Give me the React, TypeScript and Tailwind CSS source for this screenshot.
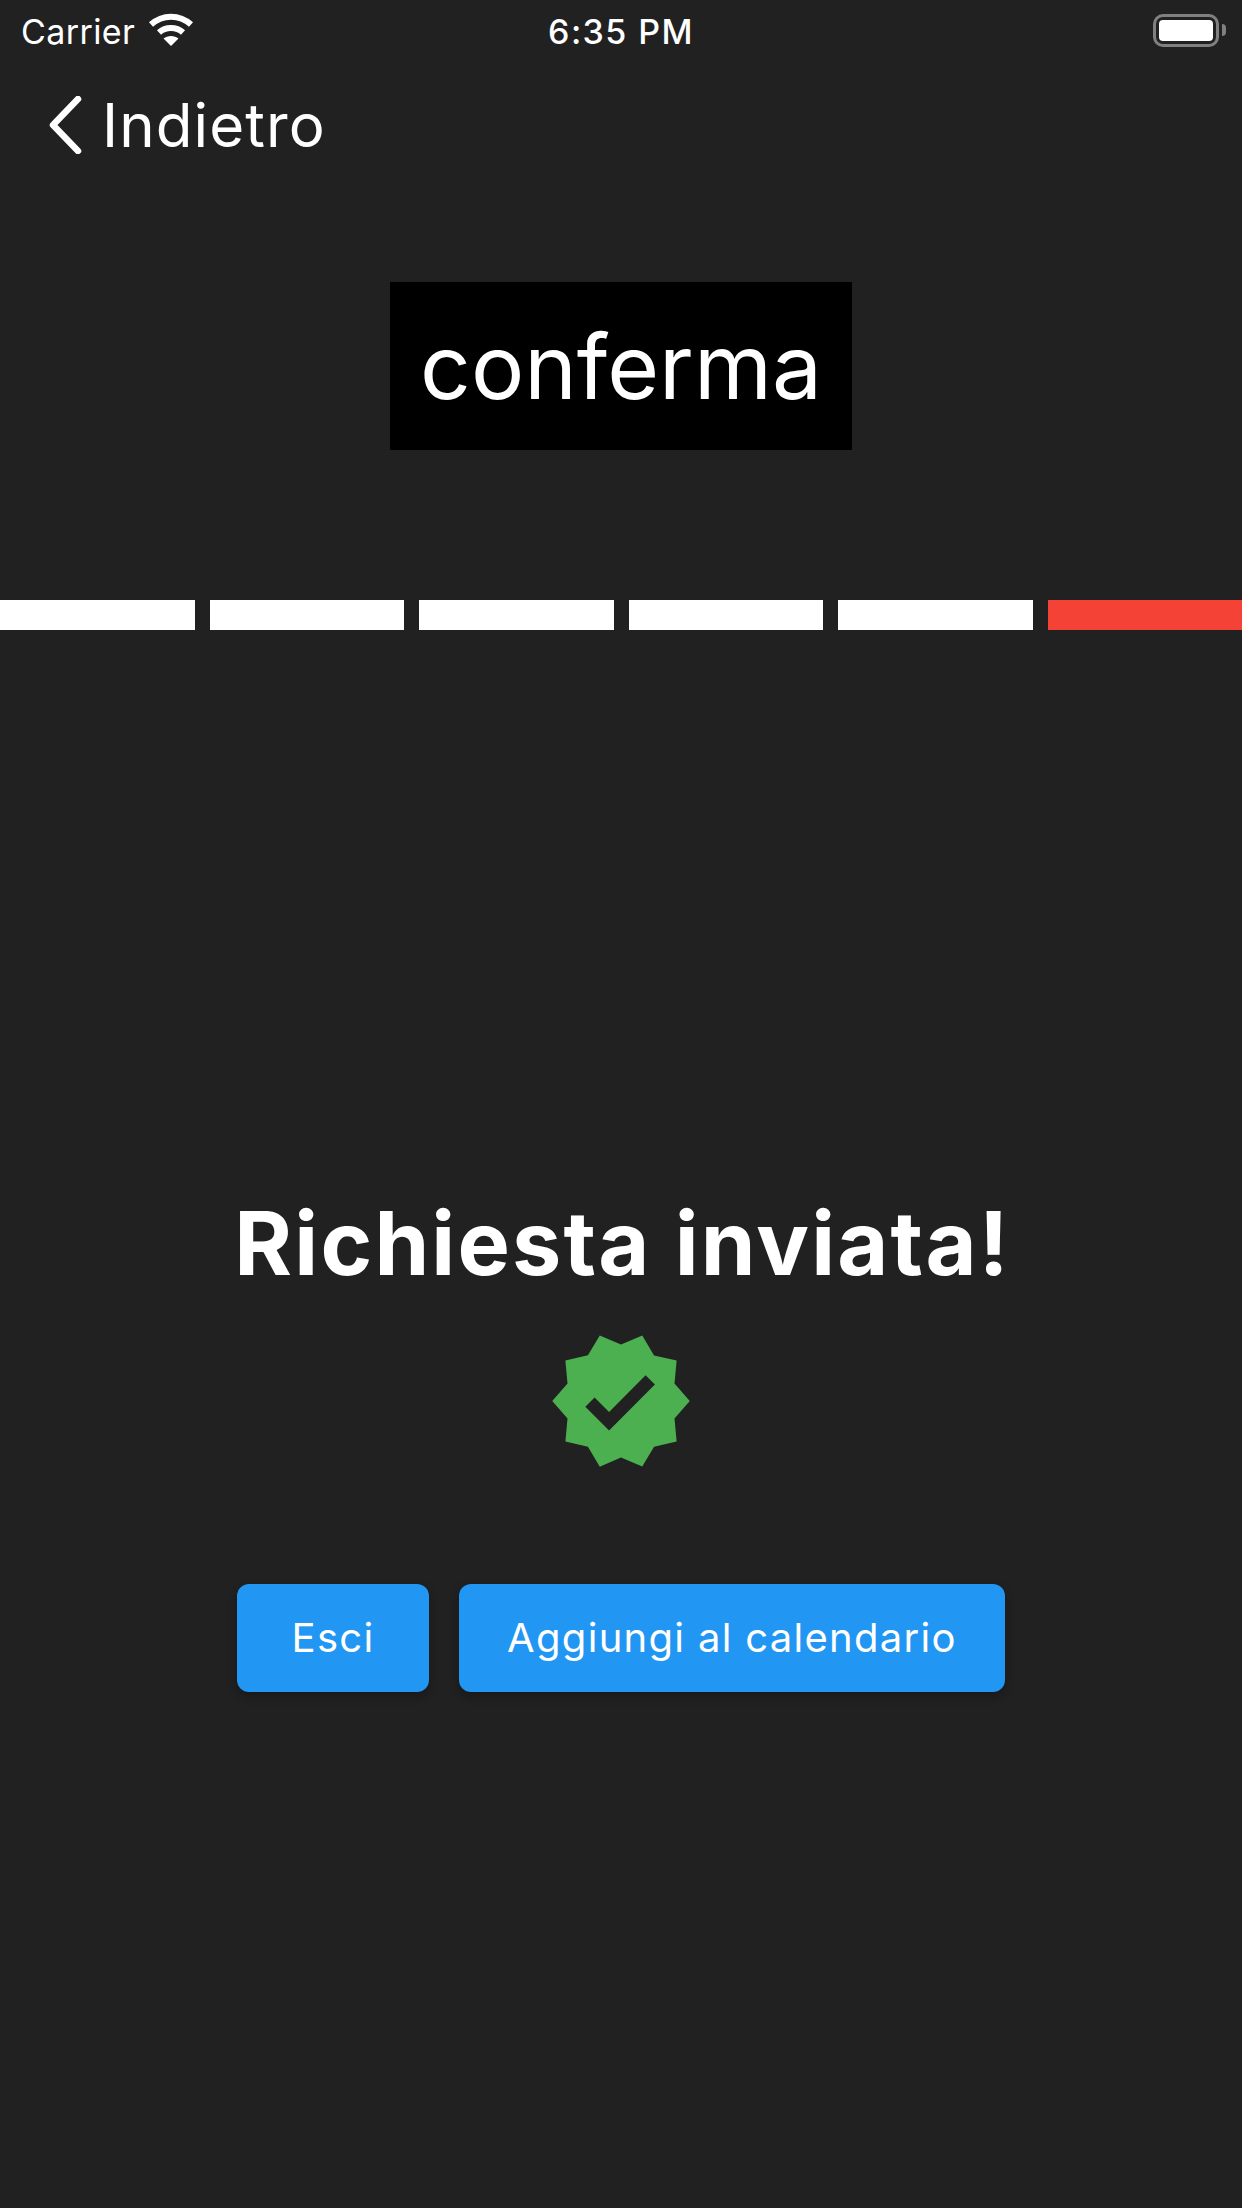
import React from "react";

const steps = [0, 1, 2, 3, 4, 5];

function WifiIcon() {
  return (
    <svg width="46" height="34" viewBox="0 0 46 34" fill="none">
      <path d="M3 11.5C14.5 1 31.5 1 43 11.5" stroke="#fff" strokeWidth="6" />
      <path d="M11 19.5C17.5 13.5 28.5 13.5 35 19.5" stroke="#fff" strokeWidth="6" />
      <path d="M23 33L15.5 25.5C19.5 22 26.5 22 30.5 25.5Z" fill="#fff" />
    </svg>
  );
}

function BatteryIcon() {
  return (
    <div className="flex items-center gap-[3px]">
      <div className="w-[66px] h-[33px] rounded-[10px] border-[3px] border-[#808080] p-[3px]">
        <div className="w-full h-full rounded-[4px] bg-white" />
      </div>
      <div className="w-[4px] h-[12px] rounded-r-full bg-[#808080]" />
    </div>
  );
}

function VerifiedIcon() {
  return (
    <svg width="150" height="150" viewBox="0 0 24 24" fill="#4caf50">
      <path d="M23 12l-2.44-2.79.34-3.69-3.61-.82-1.89-3.2L12 2.96 8.6 1.5 6.71 4.69 3.1 5.5l.34 3.7L1 12l2.44 2.79-.34 3.7 3.61.82L8.6 22.5l3.4-1.47 3.4 1.46 1.89-3.19 3.61-.82-.34-3.69L23 12zm-12.91 4.72l-3.8-3.81 1.48-1.48 2.32 2.33 5.85-5.87 1.48 1.48-7.33 7.35z" />
    </svg>
  );
}

export default function App() {
  return (
    <div className="w-[1242px] h-[2208px] bg-[#212121] text-white font-['Inter',sans-serif] flex flex-col overflow-hidden">
      <div className="grid grid-cols-3 items-center h-[60px] pl-[21px] pr-[16px]">
        <div className="flex items-center gap-[13px]">
          <span className="text-[34px] leading-none tracking-[0.4px] pt-[4px]">Carrier</span>
          <WifiIcon />
        </div>
        <span className="text-center text-[34px] leading-none font-medium tracking-[1.4px] pt-[4px] pr-[5px]">6:35 PM</span>
        <div className="flex justify-end">
          <BatteryIcon />
        </div>
      </div>

      <div className="flex items-center gap-[19px] h-[70px] mt-[30px] pl-[49px]">
        <svg width="34" height="58" viewBox="0 0 34 58" fill="none">
          <path d="M29 3L4 29L29 55" stroke="#fff" strokeWidth="6.5" strokeLinecap="round" strokeLinejoin="round" />
        </svg>
        <span className="text-[60px] leading-none tracking-[1.1px]">Indietro</span>
      </div>

      <div className="flex justify-center mt-[122px]">
        <div className="w-[462px] h-[168px] bg-black flex items-center justify-center">
          <span className="text-[89px] leading-none">conferma</span>
        </div>
      </div>

      <div className="flex gap-[15px] mt-[150px]">
        {steps.map((i) => (
          <div key={i} className={i === 5 ? "flex-1 h-[30px] bg-[#f44336]" : "flex-1 h-[30px] bg-white"} />
        ))}
      </div>

      <div className="flex flex-col items-center mt-[560px]">
        <h1 className="text-[88px] leading-[106px] font-bold tracking-[2.2px] pl-[3px]">Richiesta inviata!</h1>
        <div className="mt-[30px]">
          <VerifiedIcon />
        </div>
        <div className="flex gap-[30px] mt-[108px]">
          <button className="w-[192px] h-[108px] rounded-[12px] bg-[#2196f3] text-[40px] tracking-[1.3px] shadow-[0_4px_10px_rgba(0,0,0,0.3)]">
            Esci
          </button>
          <button className="w-[546px] h-[108px] rounded-[12px] bg-[#2196f3] text-[40px] tracking-[1.3px] shadow-[0_4px_10px_rgba(0,0,0,0.3)]">
            Aggiungi al calendario
          </button>
        </div>
      </div>
    </div>
  );
}
